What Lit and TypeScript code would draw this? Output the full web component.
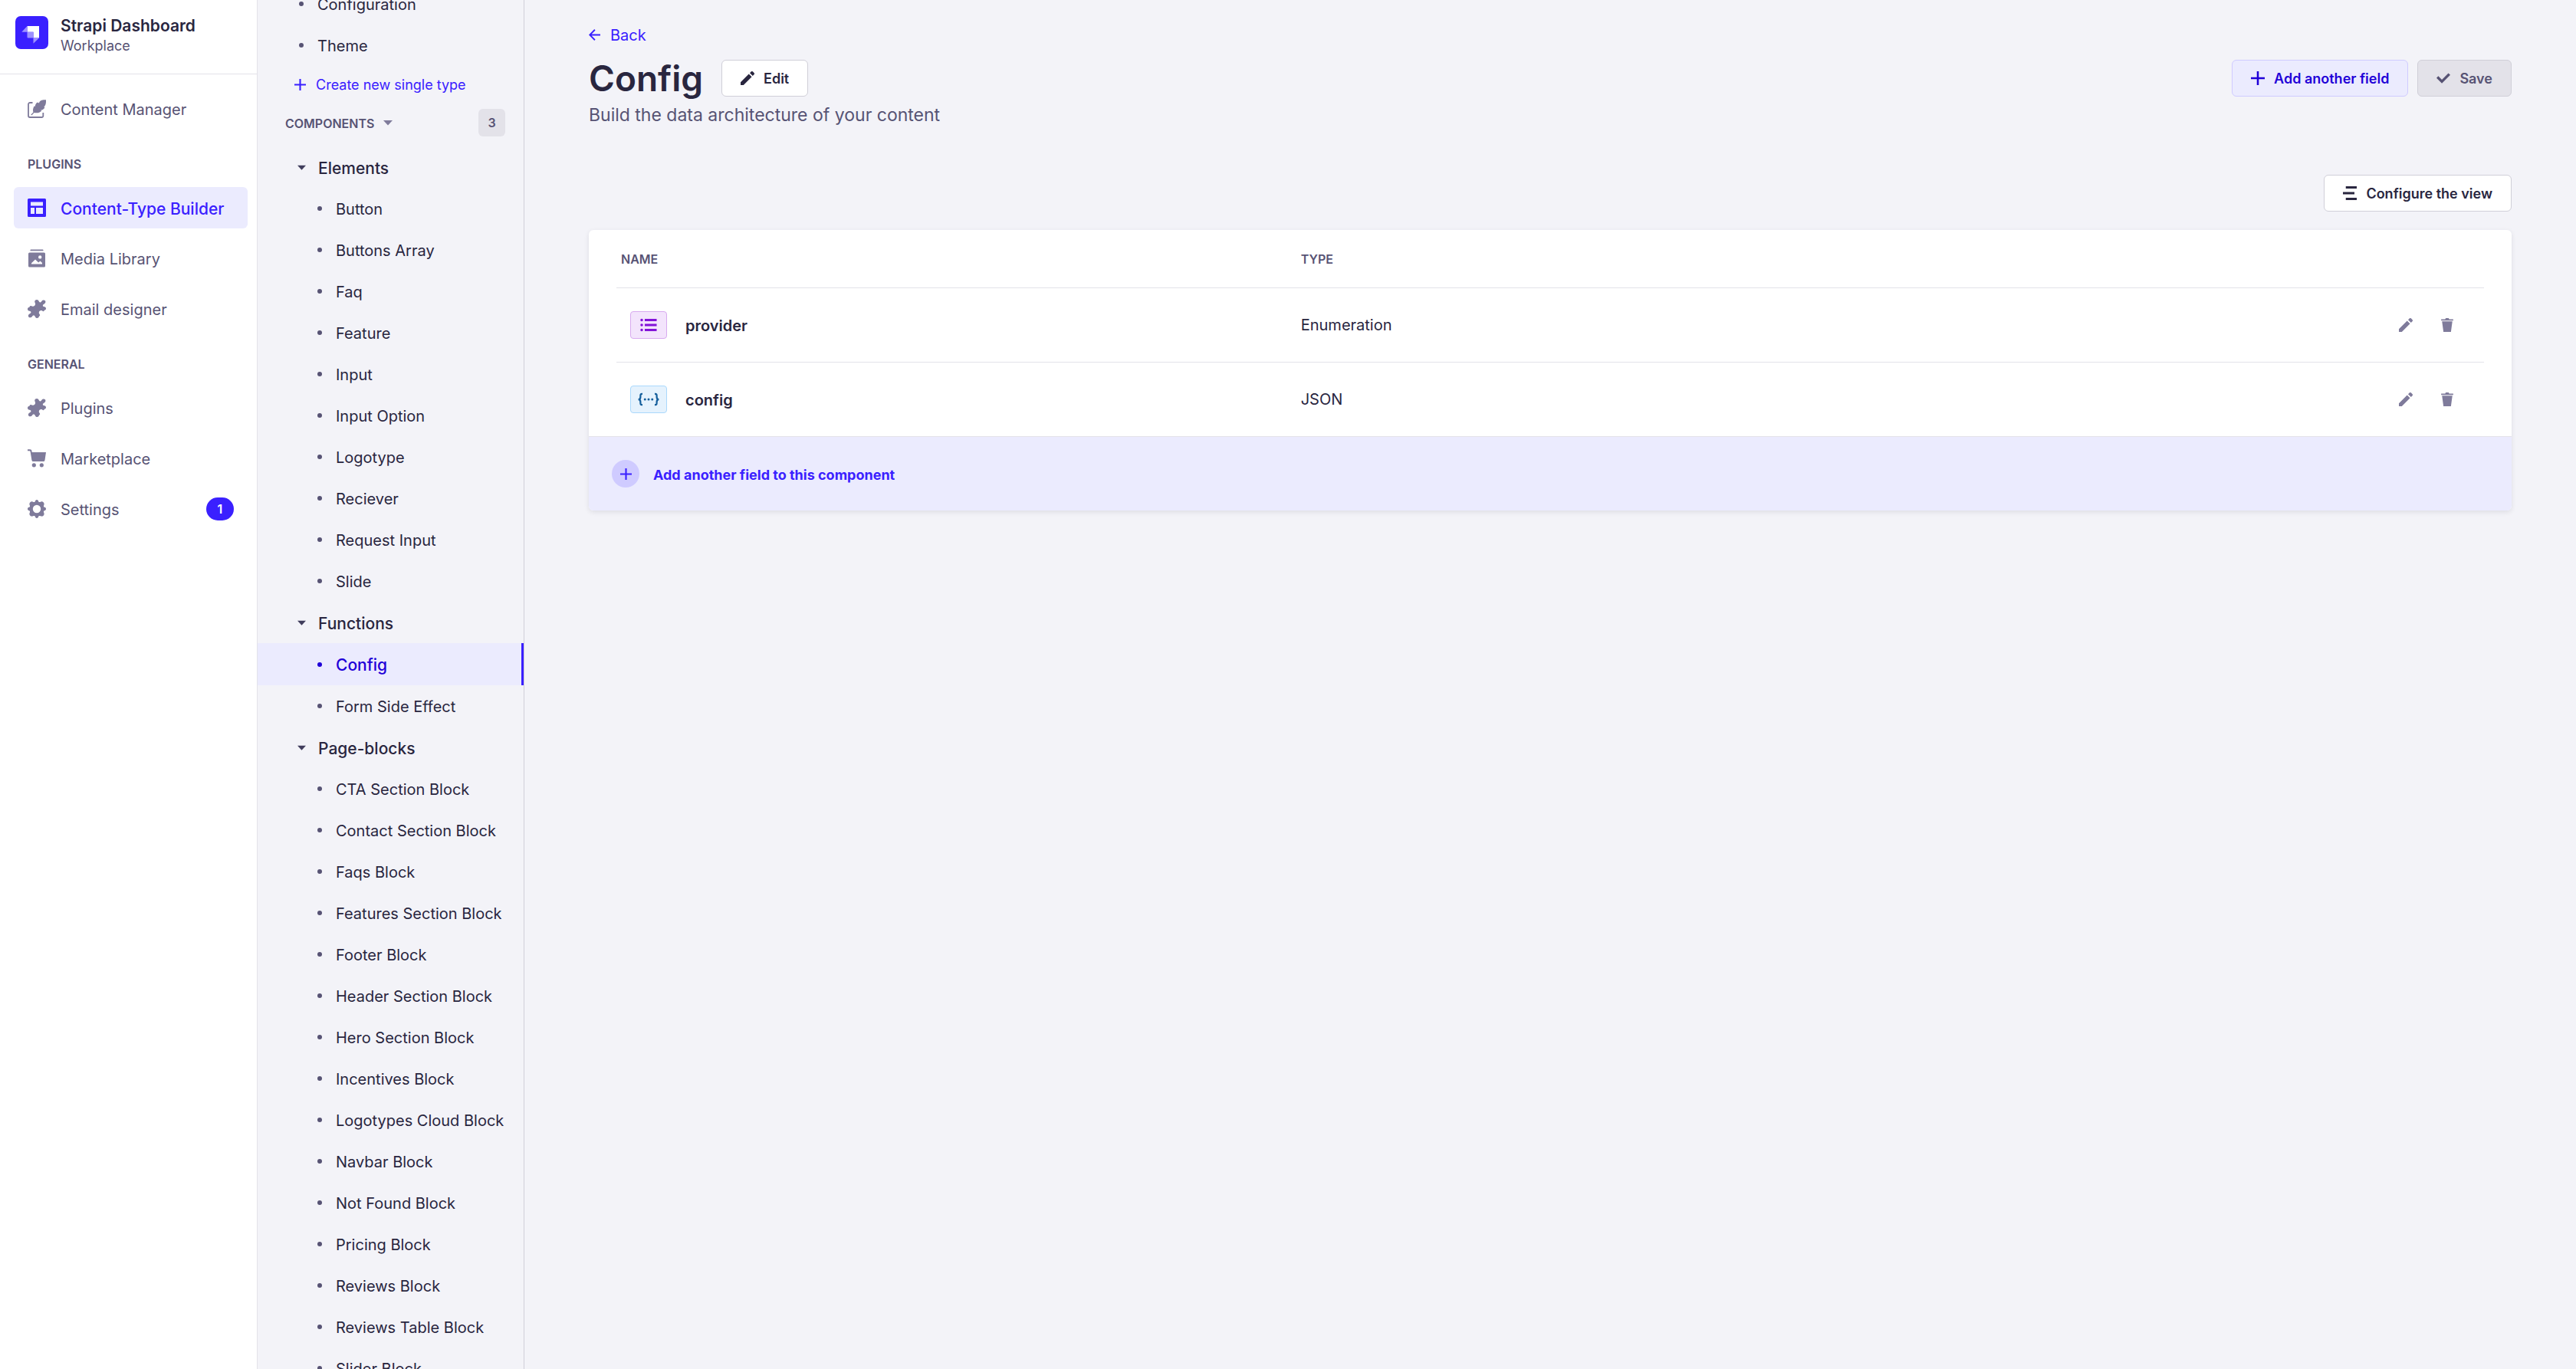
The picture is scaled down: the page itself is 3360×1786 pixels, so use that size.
import { LitElement, html, css, svg, nothing } from "lit";
import { customElement } from "lit/decorators.js";
import { classMap } from "lit/directives/class-map.js";

const ICONS = {
  feather: svg`<path d="M6.500 4H3a2 2 0 0 0-2 2v15a2 2 0 0 0 2 2h15.500a1.800 1.800 0 0 0 1.800-2v-4" fill="none" stroke="currentColor" stroke-width="1.800"/><path d="M24 0.200C18.500 0 16 0.800 14.800 4.600L13 3.600C10.500 4.800 10 7 9.800 8.800L8.600 8.400C7 11 6.600 14 7.400 16.400L4.600 19.300C4.200 20 5 20.700 5.600 20.200L8.600 17.100C12.500 17.800 16 17 18.200 14.800L17 13.800C20 13.600 21.500 12 22.400 10L21.300 9.400C23.800 7 24.200 4 24 0.200Z"/>`,
  layout: svg`<path fill-rule="evenodd" d="M1.500 0h21A1.500 1.500 0 0 1 24 1.500v21a1.500 1.500 0 0 1-1.500 1.500h-21A1.500 1.500 0 0 1 0 22.500v-21A1.500 1.500 0 0 1 1.500 0ZM4 4.500v5h16v-5H4Zm0 7.500v8h5v-8H4Zm7 0v8h9v-8h-9Z"/>`,
  media: svg`<path fill-rule="evenodd" d="M3.500 1.300C3.500.8 4 .5 4.500.5h15c.5 0 1 .3 1 .8v.9h-17v-.9ZM2.500 4.500h19a1.500 1.500 0 0 1 1.500 1.500v16a1.500 1.500 0 0 1-1.500 1.500h-19A1.500 1.500 0 0 1 1 22V6a1.500 1.500 0 0 1 1.500-1.500ZM16.200 8.200a2.200 2.200 0 1 0 0 4.400 2.200 2.200 0 0 0 0-4.400ZM5 19.500h14v-1.600L16.500 15.500l-2.300 1.900L10 13.500l-5 4.800v1.200Z"/>`,
  puzzle: svg`<path d="M12 0C10 0 9 1.400 9.300 3C9.500 4.100 10.400 4.600 10 6.300C9.600 8.200 7.600 9.200 6 8.600C5 8.200 4.700 7.800 3.600 8.100C3.100 8.300 2.900 9 2.400 9.700C.9 9.700 0 10.800 0 12.200C0 13.700 1 14.700 2.500 14.800C4 15 4.800 15.800 4.300 17C3.700 18.200 1 18.600.9 21C.9 22.700 2.300 23.600 3.900 23.300C6 23 6 21 7.400 20.500C8.600 20.200 9.300 20.800 9.800 22C10.300 23.400 11.200 24 12.400 24C14 24 14.800 22.800 15 21.600C16 21.200 16.400 20.600 16 19.600C15.700 18.600 14.600 18.300 14.800 16.500C15 14.700 16.500 13.700 18.200 14C19.300 14.200 19.700 15.200 20.600 15.200C21.300 15 21.500 14.600 21.800 13.800C23.200 13.600 24 12.800 24 11.500C24 9.800 22.800 9 21 8.900C20 8.700 19.600 8 20 7C20.800 5.500 23.400 5 23.400 2.700C23.400 1.200 22 .3 20.200.6C18.300 1 18.300 3 16.800 3.400C15.800 3.600 15.100 3 14.700 2C14.300.7 13.300 0 12 0Z"/>`,
  cart: svg`<path d="M0 .3h3.200c1.300 0 2 .7 2.200 1.900L5.700 4H24l-1.500 10.200c-.2 1.300-1 1.900-2.100 1.900H7.600c-1.200 0-2-.7-2.200-1.900L3.600 3.200C3.500 2.600 3.200 2.200 2.600 2.200H0Z"/><circle cx="8.300" cy="20.800" r="2.600"/><circle cx="18.300" cy="20.800" r="2.600"/>`,
  gear: svg`<path fill-rule="evenodd" d="M12 0c1.300 0 2 .8 2.400 2.700 1 .4 1.200.4 2 .2C18 2 19.500 2.200 20.600 3.300c1.200 1.200 1.300 2.500.5 4.200-.3.800-.2 1.200.2 2.100C23.200 10 24 10.700 24 12s-.8 2-2.700 2.400c-.4.900-.5 1.300-.2 2.100.8 1.700.7 3-.5 4.200-1.100 1.100-2.600 1.200-4.200.4-.8-.3-1.100-.2-2 .2C14 23.200 13.300 24 12 24s-2-.8-2.400-2.700c-.9-.4-1.200-.5-2-.2-1.600.8-3.100.7-4.200-.4-1.200-1.200-1.300-2.500-.5-4.200.3-.8.200-1.200-.2-2.100C.8 14 0 13.300 0 12s.8-2 2.700-2.400c.4-.9.500-1.300.2-2.100-.8-1.700-.7-3 .5-4.200C4.500 2.200 6 2 7.600 2.900c.8.200 1 .2 2-.2C10 .8 10.700 0 12 0Zm0 6.800a5.200 5.200 0 1 0 0 10.400 5.200 5.200 0 0 0 0-10.400Z"/>`,
  plus: svg`<path d="M10.300 0h3.400v10.300H24v3.400H13.700V24h-3.400V13.700H0v-3.400h10.300Z"/>`,
  check: svg`<path d="M20.700 3.200 24 6.300 9.400 20.900 0 11.600l3.200-3.200 6.200 6.100Z"/>`,
  pencil: svg`<path d="M14.300 4.600 19.400 9.700 5.100 24H0v-5.100ZM16 2.900 18.200.7a2.300 2.300 0 0 1 3.200 0l1.900 1.900a2.300 2.300 0 0 1 0 3.200L21.100 8Z"/>`,
  trash: svg`<path d="M1.500 2h7l1-2h5l1 2h7v2.200h-21ZM3 5.800h18L18.500 24h-13Z"/>`,
  lines: svg`<path d="M5 0h19v4H5ZM0 10h20v4H0ZM5 20h19v4H5Z"/>`,
  back: svg`<path d="M24 13.500H5.700l8 8.200-2.100 2.300L0 12 11.600 0l2.100 2.300-8 8.200H24Z"/>`,
  caret: svg`<path d="M0 6h24L12 19Z"/>`,
  list: svg`<path d="M6.500 3.200h17v3.400h-17ZM6.500 10.300h17v3.400h-17ZM6.500 17.400h17v3.400h-17Z"/><circle cx="2.200" cy="4.900" r="1.900"/><circle cx="2.200" cy="12" r="1.900"/><circle cx="2.200" cy="19.100" r="1.900"/>`,
  json: svg`<path d="M5.600 6.300C3.200 6.100 3.500 7.500 3.500 9.500 3.500 11.200 3 12 1.300 12 3 12 3.500 12.800 3.500 14.500 3.500 16.500 3.200 17.900 5.600 17.700M18.400 6.300C20.800 6.100 20.500 7.500 20.500 9.500 20.500 11.200 21 12 22.700 12 21 12 20.500 12.800 20.500 14.500 20.500 16.500 20.800 17.900 18.400 17.700" fill="none" stroke="currentColor" stroke-width="1.800"/><circle cx="8.200" cy="12" r="1.200"/><circle cx="12" cy="12" r="1.200"/><circle cx="15.800" cy="12" r="1.200"/>`,
};

type IconName = keyof typeof ICONS;

const icon = (name: IconName) =>
  html`<svg class="icon ${name}" viewBox="0 0 24 24" fill="currentColor" aria-hidden="true">${ICONS[name]}</svg>`;

interface NavItem {
  label: string;
  icon: IconName;
  active?: boolean;
  badge?: number;
}

const PLUGINS: NavItem[] = [
  { label: "Content-Type Builder", icon: "layout", active: true },
  { label: "Media Library", icon: "media" },
  { label: "Email designer", icon: "puzzle" },
];

const GENERAL: NavItem[] = [
  { label: "Plugins", icon: "puzzle" },
  { label: "Marketplace", icon: "cart" },
  { label: "Settings", icon: "gear", badge: 1 },
];

const GROUPS = [
  {
    name: "Elements",
    items: ["Button", "Buttons Array", "Faq", "Feature", "Input", "Input Option", "Logotype", "Reciever", "Request Input", "Slide"],
  },
  { name: "Functions", items: ["Config", "Form Side Effect"] },
  {
    name: "Page-blocks",
    items: [
      "CTA Section Block", "Contact Section Block", "Faqs Block", "Features Section Block", "Footer Block",
      "Header Section Block", "Hero Section Block", "Incentives Block", "Logotypes Cloud Block", "Navbar Block",
      "Not Found Block", "Pricing Block", "Reviews Block", "Reviews Table Block", "Slider Block",
    ],
  },
];

const FIELDS: { name: string; type: string; icon: IconName }[] = [
  { name: "provider", type: "Enumeration", icon: "list" },
  { name: "config", type: "JSON", icon: "json" },
];

const base = css`
  :host, * { box-sizing: border-box; }
  a { color: inherit; text-decoration: none; }
  button { font: inherit; color: inherit; background: none; border: 0; padding: 0; margin: 0; cursor: pointer; }
  ul { list-style: none; margin: 0; padding: 0; }
  .icon { display: block; flex: none; width: 18px; height: 18px; }
`;

@customElement("main-nav")
class MainNav extends LitElement {
  static styles = [base, css`
    :host { display: flex; flex-direction: column; width: 336px; flex: none; background: #fff; border-right: 1px solid #e3e2e9; }
    .brand { display: flex; align-items: flex-start; gap: 16px; height: 97px; padding: 20px 20px 0; border-bottom: 1px solid #e3e2e9; }
    .logo { width: 43px; height: 43px; margin-top: 1px; flex: none; }
    .title { font-size: 21px; font-weight: 600; line-height: 27px; color: #29263f; }
    .sub { font-size: 18px; line-height: 26px; color: #575374; }
    .list { display: flex; flex-direction: column; gap: 12px; padding: 0 12px 0 18px; }
    .list.first { padding-top: 18px; }
    .link { display: flex; align-items: center; gap: 19px; height: 54px; padding: 0 18px; border-radius: 6px; font-size: 20px; color: #575374; }
    .link .icon { width: 24px; height: 24px; color: #7f7b9b; }
    .link.active { background: #ebebfe; color: #3a20ff; font-size: 21px; font-weight: 500; }
    .link.active .icon { color: #3a20ff; }
    .label { flex: 1; padding-top: 2px; white-space: nowrap; }
    .heading { margin: 0; padding: 34px 36px 18px; font-size: 16px; line-height: 23px; font-weight: 600; color: #575374; }
    .badge { display: grid; place-items: center; width: 36px; height: 30px; border-radius: 15px; background: #3a20ff; color: #fff; font-size: 16px; font-weight: 600; }
  `];

  private item(i: NavItem) {
    return html`<li><a href="#" class=${classMap({ link: true, active: !!i.active })}>
      ${icon(i.icon)}<span class="label">${i.label}</span>
      ${i.badge ? html`<span class="badge">${i.badge}</span>` : nothing}
    </a></li>`;
  }

  render() {
    return html`
      <div class="brand">
        <svg class="logo" viewBox="0 0 43 43" aria-hidden="true">
          <rect width="43" height="43" rx="7" fill="#3a20ff"/>
          <path d="M15.500 13H31v15.500h-7.500v-7.700h-8Z" fill="#fff"/>
          <path d="M15.500 20.800h8v7.700h-7a1 1 0 0 1-1-1Z" fill="#9d90ff"/>
          <path d="M15.500 13v7.800H8.300ZM23.500 28.500H31l-7.500 7.200Z" fill="#9d90ff"/>
        </svg>
        <div><div class="title">Strapi Dashboard</div><div class="sub">Workplace</div></div>
      </div>
      <nav aria-label="Main">
        <ul class="list first">${this.item({ label: "Content Manager", icon: "feather" })}</ul>
        <h2 class="heading">PLUGINS</h2>
        <ul class="list">${PLUGINS.map((i) => this.item(i))}</ul>
        <h2 class="heading">GENERAL</h2>
        <ul class="list">${GENERAL.map((i) => this.item(i))}</ul>
      </nav>`;
  }
}

@customElement("type-nav")
class TypeNav extends LitElement {
  static styles = [base, css`
    :host { display: block; width: 348px; flex: none; overflow: hidden; border-right: 1px solid #d0cfd8; color: #29263f; }
    .scrolled { margin-top: -22px; }
    .row { display: flex; align-items: center; width: 100%; height: 54px; padding-left: 54px; font-size: 20px; text-align: left; white-space: nowrap; }
    .row.child { padding-left: 78px; }
    .text { padding-top: 2px; }
    .dot { width: 6px; height: 6px; margin-right: 18px; border-radius: 50%; background: #575374; flex: none; }
    .row.active { height: 55px; background: #ebebfe; color: #1f00d8; font-size: 21px; font-weight: 500; border-right: 3px solid #3a20ff; }
    .row.active .dot { background: #1f00d8; }
    .row.group { padding-left: 52px; font-size: 21px; font-weight: 500; gap: 16px; }
    .row.group .icon { width: 11px; height: 11px; color: #403d5c; }
    .create { display: flex; align-items: center; gap: 13px; height: 49px; padding-left: 48px; font-size: 18px; color: #3a20ff; }
    .create .icon { width: 15px; height: 15px; }
    .section { display: flex; align-items: center; justify-content: space-between; height: 36px; margin: 7px 24px 13px 36px; }
    .toggle { display: flex; align-items: center; gap: 12px; font-size: 16px; font-weight: 600; color: #575374; }
    .toggle .icon { width: 12px; height: 12px; color: #7f7b9b; }
    .count { display: grid; place-items: center; width: 35px; height: 36px; border-radius: 6px; background: #e3e2e9; font-size: 16px; font-weight: 600; color: #575374; }
  `];

  render() {
    return html`<nav class="scrolled" aria-label="Content types">
      <ul>${["Configuration", "Theme"].map((t) => html`<li><a class="row" href="#"><span class="dot"></span><span class="text">${t}</span></a></li>`)}</ul>
      <a class="create" href="#">${icon("plus")}Create new single type</a>
      <div class="section">
        <button class="toggle" aria-expanded="true"><span class="text">COMPONENTS</span>${icon("caret")}</button>
        <span class="count">3</span>
      </div>
      ${GROUPS.map((g) => html`
        <button class="row group" aria-expanded="true">${icon("caret")}<span class="text">${g.name}</span></button>
        <ul>${g.items.map((t) => html`<li><a href="#" class=${classMap({ row: true, child: true, active: t === "Config" })}>
          <span class="dot"></span><span class="text">${t}</span></a></li>`)}</ul>`)}
    </nav>`;
  }
}

@customElement("type-editor")
class TypeEditor extends LitElement {
  static styles = [base, css`
    :host { display: block; flex: 1; min-width: 0; padding: 30px 84px; color: #29263f; }
    .back { display: inline-flex; align-items: center; gap: 13px; height: 30px; font-size: 20px; color: #3a20ff; vertical-align: top; }
    .back .icon { width: 15px; height: 15px; }
    .head { display: flex; align-items: center; gap: 12px; height: 48px; margin-top: 18px; }
    h1 { margin: 0 12px 0 0; font-size: 46px; line-height: 48px; font-weight: 600; }
    .push { margin-left: auto; }
    .lead { margin: 6px 0 0; font-size: 23px; line-height: 36px; color: #575374; }
    .btn { display: flex; align-items: center; gap: 12px; height: 48px; padding: 0 24px; border: 1px solid #d0cfd8; border-radius: 6px; background: #fff; font-size: 18px; font-weight: 600; white-space: nowrap; }
    .btn.secondary { background: #ebebfe; border-color: #cfcbff; color: #1f00d8; }
    .btn:disabled { background: #e3e2e9; color: #575374; }
    .tools { display: flex; justify-content: flex-end; margin: 60px 0 24px; }
    .card { border-radius: 6px; background: #fff; box-shadow: 0 2px 6px rgba(33, 33, 52, 0.1); overflow: hidden; }
    .wrap { padding: 0 36px; }
    table { width: 100%; border-collapse: collapse; table-layout: fixed; }
    .c-name { width: 36.400%; }
    th { height: 75px; padding: 2px 6px 0; text-align: left; font-size: 16px; font-weight: 600; color: #575374; }
    td { height: 97px; padding: 0 6px; border-top: 1px solid #e3e2e9; font-size: 20px; }
    .name { display: flex; align-items: center; gap: 24px; padding-left: 12px; font-weight: 600; }
    .text { padding-top: 2px; }
    .kind { display: grid; place-items: center; width: 48px; height: 36px; border: 1px solid; border-radius: 4px; }
    .kind.list { color: #8312d8; background: #f3e4fc; border-color: #d8aaf0; }
    .kind.json { color: #155f9c; background: #e5f2fd; border-color: #aad8fc; }
    .kind .icon { width: 22px; height: 22px; }
    .kind .icon.json { width: 30px; height: 30px; }
    .actions { display: flex; justify-content: flex-end; gap: 36px; padding-right: 33px; color: #7f7b9b; }
    .add { display: flex; align-items: center; gap: 18px; width: 100%; height: 97px; padding: 0 30px; border-top: 1px solid #e3e2e9; background: #ebebfe; color: #3a20ff; font-size: 18px; font-weight: 700; }
    .circle { display: grid; place-items: center; width: 36px; height: 36px; border-radius: 50%; background: #cfcbff; }
    .circle .icon { width: 15px; height: 15px; }
  `];

  render() {
    return html`
      <a class="back" href="#">${icon("back")}<span class="text">Back</span></a>
      <header class="head">
        <h1>Config</h1>
        <button class="btn">${icon("pencil")}Edit</button>
        <button class="btn secondary push">${icon("plus")}Add another field</button>
        <button class="btn" disabled>${icon("check")}Save</button>
      </header>
      <p class="lead">Build the data architecture of your content</p>
      <div class="tools"><button class="btn">${icon("lines")}Configure the view</button></div>
      <section class="card">
        <div class="wrap">
          <table>
            <thead><tr><th class="c-name" scope="col">NAME</th><th scope="col">TYPE</th><th></th></tr></thead>
            <tbody>${FIELDS.map((f) => html`<tr>
              <td><div class="name"><span class="kind ${f.icon}">${icon(f.icon)}</span><span class="text">${f.name}</span></div></td>
              <td>${f.type}</td>
              <td><div class="actions">
                <button aria-label="Edit ${f.name}">${icon("pencil")}</button>
                <button aria-label="Delete ${f.name}">${icon("trash")}</button>
              </div></td>
            </tr>`)}</tbody>
          </table>
        </div>
        <button class="add"><span class="circle">${icon("plus")}</span><span class="text">Add another field to this component</span></button>
      </section>`;
  }
}

@customElement("app-root")
class AppRoot extends LitElement {
  static styles = css`
    :host { display: flex; height: 100vh; overflow: hidden; background: #f3f3f8; font-family: Inter, "Liberation Sans", sans-serif; }
  `;

  render() {
    return html`<main-nav></main-nav><type-nav></type-nav><type-editor role="main"></type-editor>`;
  }
}
